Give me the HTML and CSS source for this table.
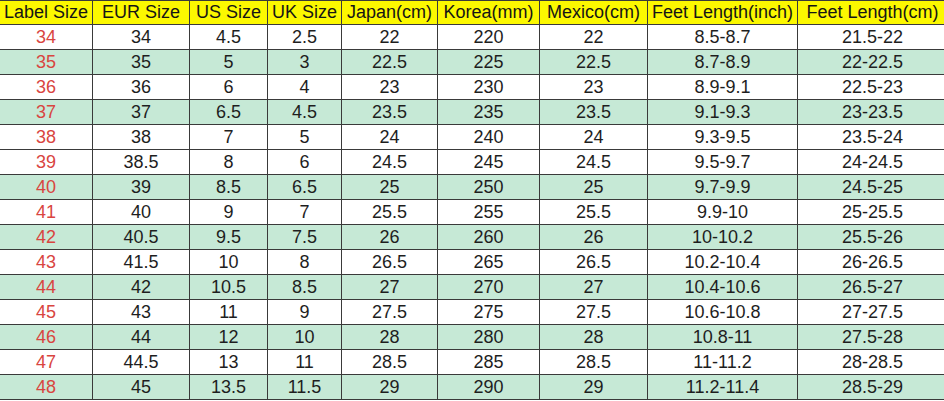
FILE: index.html
```html
<!DOCTYPE html>
<html>
<head>
<meta charset="utf-8">
<link rel="stylesheet" href="styles.css">
</head>
<body>
<table class="size-table">
  <colgroup>
    <col class="c1"><col class="c2"><col class="c3"><col class="c4"><col class="c5"><col class="c6"><col class="c7"><col class="c8"><col class="c9">
  </colgroup>
  <thead>
    <tr>
      <th>Label Size</th><th>EUR Size</th><th>US Size</th><th>UK Size</th><th>Japan(cm)</th><th>Korea(mm)</th><th>Mexico(cm)</th><th>Feet Length(inch)</th><th>Feet Length(cm)</th>
    </tr>
  </thead>
  <tbody>
    <tr><td class="label">34</td><td>34</td><td>4.5</td><td>2.5</td><td>22</td><td>220</td><td>22</td><td>8.5-8.7</td><td>21.5-22</td></tr>
    <tr class="green"><td class="label">35</td><td>35</td><td>5</td><td>3</td><td>22.5</td><td>225</td><td>22.5</td><td>8.7-8.9</td><td>22-22.5</td></tr>
    <tr><td class="label">36</td><td>36</td><td>6</td><td>4</td><td>23</td><td>230</td><td>23</td><td>8.9-9.1</td><td>22.5-23</td></tr>
    <tr class="green"><td class="label">37</td><td>37</td><td>6.5</td><td>4.5</td><td>23.5</td><td>235</td><td>23.5</td><td>9.1-9.3</td><td>23-23.5</td></tr>
    <tr><td class="label">38</td><td>38</td><td>7</td><td>5</td><td>24</td><td>240</td><td>24</td><td>9.3-9.5</td><td>23.5-24</td></tr>
    <tr><td class="label">39</td><td>38.5</td><td>8</td><td>6</td><td>24.5</td><td>245</td><td>24.5</td><td>9.5-9.7</td><td>24-24.5</td></tr>
    <tr class="green"><td class="label">40</td><td>39</td><td>8.5</td><td>6.5</td><td>25</td><td>250</td><td>25</td><td>9.7-9.9</td><td>24.5-25</td></tr>
    <tr><td class="label">41</td><td>40</td><td>9</td><td>7</td><td>25.5</td><td>255</td><td>25.5</td><td>9.9-10</td><td>25-25.5</td></tr>
    <tr class="green"><td class="label">42</td><td>40.5</td><td>9.5</td><td>7.5</td><td>26</td><td>260</td><td>26</td><td>10-10.2</td><td>25.5-26</td></tr>
    <tr><td class="label">43</td><td>41.5</td><td>10</td><td>8</td><td>26.5</td><td>265</td><td>26.5</td><td>10.2-10.4</td><td>26-26.5</td></tr>
    <tr class="green"><td class="label">44</td><td>42</td><td>10.5</td><td>8.5</td><td>27</td><td>270</td><td>27</td><td>10.4-10.6</td><td>26.5-27</td></tr>
    <tr><td class="label">45</td><td>43</td><td>11</td><td>9</td><td>27.5</td><td>275</td><td>27.5</td><td>10.6-10.8</td><td>27-27.5</td></tr>
    <tr class="green"><td class="label">46</td><td>44</td><td>12</td><td>10</td><td>28</td><td>280</td><td>28</td><td>10.8-11</td><td>27.5-28</td></tr>
    <tr><td class="label">47</td><td>44.5</td><td>13</td><td>11</td><td>28.5</td><td>285</td><td>28.5</td><td>11-11.2</td><td>28-28.5</td></tr>
    <tr class="green"><td class="label">48</td><td>45</td><td>13.5</td><td>11.5</td><td>29</td><td>290</td><td>29</td><td>11.2-11.4</td><td>28.5-29</td></tr>
  </tbody>
</table>
</body>
</html>
```

FILE: styles.css
```css
html, body {
  margin: 0;
  padding: 0;
  background: #ffffff;
  overflow: hidden;
}

.size-table {
  border-collapse: collapse;
  table-layout: fixed;
  width: 948px;
  margin-left: -1px;
  font-family: "Liberation Sans", Arial, sans-serif;
  font-size: 18px;
  color: #1e1e1e;
}

.c1 { width: 93px; }
.c2 { width: 97px; }
.c3 { width: 78px; }
.c4 { width: 74px; }
.c5 { width: 96px; }
.c6 { width: 102px; }
.c7 { width: 108px; }
.c8 { width: 150px; }
.c9 { width: 150px; }

.size-table th,
.size-table td {
  border: 1px solid #3a3a3a;
  padding: 0;
  text-align: center;
  vertical-align: middle;
  white-space: nowrap;
  overflow: hidden;
}

.size-table th {
  height: 23px;
  background: #fcf800;
  font-weight: normal;
  color: #151515;
  line-height: 23px;
}

.size-table td {
  height: 24px;
  line-height: 24px;
}

.size-table tr.green td {
  background: #c6e9d6;
}

.size-table td.label {
  color: #d9453f;
}
```
